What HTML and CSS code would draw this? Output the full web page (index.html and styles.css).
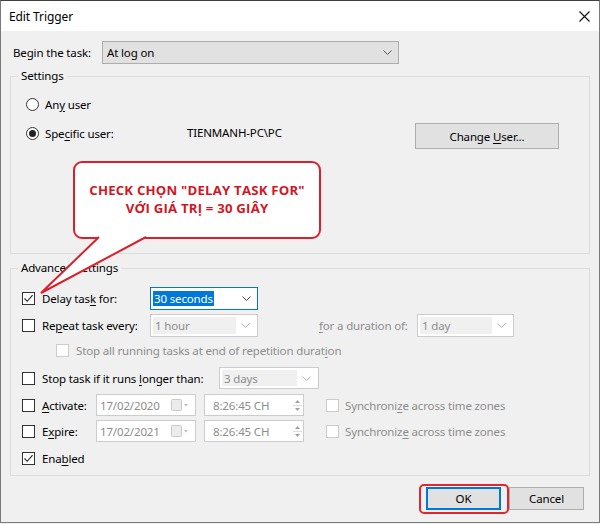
FILE: index.html
```html
<!DOCTYPE html>
<html>
<head>
<meta charset="utf-8">
<title>Edit Trigger</title>
<link rel="stylesheet" href="styles.css">
</head>
<body>
<div class="window">
  <div class="titlebar">
    <span class="title">Edit Trigger</span>
    <svg class="close" viewBox="0 0 11 11"><path d="M0.5 0.5 L10.5 10.5 M10.5 0.5 L0.5 10.5" stroke="#111" stroke-width="1.1" fill="none"/></svg>
  </div>
  <div class="content">
    <div class="begin-row">
      <span class="begin-label">Begin the task:</span>
      <div class="select">
        <span class="val">At log on</span>
        <svg class="chev" viewBox="0 0 9 5"><path d="M0.5 0.5 L4.5 4.5 L8.5 0.5" stroke="#555" fill="none"/></svg>
      </div>
    </div>

    <div class="group settings">
      <span class="group-title">Settings</span>
      <div class="row radio-row">
        <span class="radio"></span><span class="lbl">An<u>y</u> user</span>
      </div>
      <div class="row specific">
        <div class="radio-part"><span class="radio checked"></span><span class="lbl">Spe<u>c</u>ific user:</span></div>
        <span class="username">TIENMANH-PC\PC</span>
        <button class="btn change">Change <u>U</u>ser...</button>
      </div>
    </div>

    <div class="group advanced">
      <span class="group-title">Advanced Settings</span>

      <div class="row r-delay">
        <span class="cb checked"><svg viewBox="0 0 11 11"><path d="M1.5 5.5 L4.2 8.3 L9.6 2.2" stroke="#222" stroke-width="1.1" fill="none"/></svg></span>
        <span class="lbl w-delay">Delay tas<u>k</u> for:</span>
        <div class="combo edit w-108">
          <span class="val"><span class="sel">30 seconds</span></span>
          <svg class="chev" viewBox="0 0 9 5"><path d="M0.5 0.5 L4.5 4.5 L8.5 0.5" stroke="#444" fill="none"/></svg>
        </div>
      </div>

      <div class="row r-repeat">
        <span class="cb"></span>
        <span class="lbl w-delay">Re<u>p</u>eat task every:</span>
        <div class="combo disabled w-108">
          <span class="val">1 hour</span>
          <span class="arr"><svg class="chev" viewBox="0 0 9 5"><path d="M0.5 0.5 L4.5 4.5 L8.5 0.5" stroke="#b5b5b5" fill="none"/></svg></span>
        </div>
        <span class="lbl gray dur"><u>f</u>or a duration of:</span>
        <div class="combo disabled w-97">
          <span class="val">1 day</span>
          <span class="arr"><svg class="chev" viewBox="0 0 9 5"><path d="M0.5 0.5 L4.5 4.5 L8.5 0.5" stroke="#b5b5b5" fill="none"/></svg></span>
        </div>
      </div>

      <div class="row r-stopall">
        <span class="cb disabled"></span>
        <span class="lbl gray">Stop all running tasks at end of repetition durat<u>i</u>on</span>
      </div>

      <div class="row r-stop">
        <span class="cb"></span>
        <span class="lbl w-stop">Stop task if it runs <u>l</u>onger than:</span>
        <div class="combo disabled w-100">
          <span class="val">3 days</span>
          <span class="arr"><svg class="chev" viewBox="0 0 9 5"><path d="M0.5 0.5 L4.5 4.5 L8.5 0.5" stroke="#b5b5b5" fill="none"/></svg></span>
        </div>
      </div>

      <div class="row r-act">
        <span class="cb"></span>
        <span class="lbl w-act"><u>A</u>ctivate:</span>
        <div class="picker date">
          <span class="val">17/02/2020</span>
          <svg class="cal" viewBox="0 0 20 12"><rect x="0.5" y="0.5" width="10" height="11" rx="1" fill="#ececec" stroke="#c9c9c9"/><path d="M13 5 L17 5 L15 7.5 Z" fill="#bdbdbd"/></svg>
        </div>
        <div class="picker time">
          <span class="val">8:26:45 CH</span>
          <span class="spin"><svg viewBox="0 0 9 19"><path d="M2 7 L4.5 4 L7 7 Z" fill="#a0a0a0"/><path d="M2 12 L4.5 15 L7 12 Z" fill="#a0a0a0"/><path d="M0 9.5 H9" stroke="#dcdcdc"/></svg></span>
        </div>
        <span class="cb disabled sync"></span>
        <span class="lbl gray">Synchroni<u>z</u>e across time zones</span>
      </div>

      <div class="row r-exp">
        <span class="cb"></span>
        <span class="lbl w-act">E<u>x</u>pire:</span>
        <div class="picker date">
          <span class="val">17/02/2021</span>
          <svg class="cal" viewBox="0 0 20 12"><rect x="0.5" y="0.5" width="10" height="11" rx="1" fill="#ececec" stroke="#c9c9c9"/><path d="M13 5 L17 5 L15 7.5 Z" fill="#bdbdbd"/></svg>
        </div>
        <div class="picker time">
          <span class="val">8:26:45 CH</span>
          <span class="spin"><svg viewBox="0 0 9 19"><path d="M2 7 L4.5 4 L7 7 Z" fill="#a0a0a0"/><path d="M2 12 L4.5 15 L7 12 Z" fill="#a0a0a0"/><path d="M0 9.5 H9" stroke="#dcdcdc"/></svg></span>
        </div>
        <span class="cb disabled sync"></span>
        <span class="lbl gray">Synchroniz<u>e</u> across time zones</span>
      </div>

      <div class="row r-enabled">
        <span class="cb checked"><svg viewBox="0 0 11 11"><path d="M1.5 5.5 L4.2 8.3 L9.6 2.2" stroke="#222" stroke-width="1.1" fill="none"/></svg></span>
        <span class="lbl">Ena<u>b</u>led</span>
      </div>
    </div>

    <div class="buttons">
      <div class="ok-wrap">
        <button class="btn ok">OK</button>
        <span class="highlight"></span>
      </div>
      <button class="btn cancel">Cancel</button>
    </div>
  </div>

  <div class="callout">
    <p>CHECK CHỌN "DELAY TASK FOR"</p>
    <p>VỚI GIÁ TRỊ = 30 GIÂY</p>
  </div>
  <svg class="tail" viewBox="0 0 120 62">
    <path d="M62 0 L4 56 L109 0 Z" fill="#fff"/>
    <path d="M62 0 L4 56 L109 0" fill="none" stroke="#d9212b" stroke-width="2" stroke-linejoin="miter"/>
  </svg>
</div>
</body>
</html>
```

FILE: styles.css
```css
* { box-sizing: border-box; }
html, body { margin: 0; padding: 0; }
body {
  width: 600px;
  height: 524px;
  overflow: hidden;
  background: #f0f0f0;
  font-family: "Noto Sans", "Segoe UI", sans-serif;
  font-size: 11.5px;
  letter-spacing: -0.15px;
  color: #000;
}
u { text-decoration-thickness: 1px; text-underline-offset: 2px; }

.window {
  position: relative;
  width: 600px;
  height: 523px;
  border: 1px solid #7a7a7a;
  border-top-color: #3f3f3f;
  background: #f0f0f0;
}

.titlebar {
  height: 30px;
  background: #fff;
  display: flex;
  align-items: center;
  justify-content: space-between;
  padding: 0 9px 0 8px;
}
.title { font-size: 12px; letter-spacing: -0.1px; }
.close { width: 11px; height: 11px; display: block; }

.content { padding: 10px 9px 0 9px; }

.begin-row {
  height: 23px;
  display: flex;
  align-items: center;
}
.begin-label { width: 89px; margin-left: 3px; }
.select {
  width: 297px;
  height: 23px;
  background: #e1e1e1;
  border: 1px solid #adadad;
  display: flex;
  align-items: center;
  justify-content: space-between;
  padding: 0 6px 0 4px;
}
.chev { width: 9px; height: 5px; display: block; }

.group {
  position: relative;
  border: 1px solid #dcdcdc;
  width: 580px;
}
.group-title {
  position: absolute;
  top: -9px;
  left: 7px;
  padding: 0 3px;
  line-height: 16px;
  background: #f0f0f0;
}
.settings {
  margin-top: 12px;
  height: 178px;
  padding: 17px 0 0 15px;
}
.advanced {
  margin-top: 14px;
  height: 208px;
  padding: 18px 0 0 11px;
}

.row { display: flex; align-items: center; }
.radio-row { height: 20px; }
.radio {
  width: 13px;
  height: 13px;
  border: 1px solid #333;
  border-radius: 50%;
  background: #fff;
  margin-right: 6px;
  flex: none;
  display: flex;
  align-items: center;
  justify-content: center;
}
.radio.checked::after {
  content: "";
  width: 7px;
  height: 7px;
  border-radius: 50%;
  background: #222;
}
.specific { margin-top: 9px; align-items: flex-start; }
.radio-part { width: 161px; height: 20px; display: flex; align-items: center; }
.username { width: 228px; height: 20px; line-height: 20px; }

.btn {
  font-family: inherit;
  font-size: 11.5px;
  letter-spacing: -0.15px;
  color: #000;
  background: #e1e1e1;
  border: 1px solid #adadad;
  padding: 0;
  margin: 0;
}
.change { width: 144px; height: 26px; }

.cb {
  width: 13px;
  height: 13px;
  border: 1px solid #333;
  background: #fff;
  flex: none;
  margin-right: 7px;
  display: flex;
  align-items: center;
  justify-content: center;
}
.cb svg { width: 11px; height: 11px; display: block; }
.cb.disabled { border-color: #cccccc; }

.gray { color: #8d8d8d; }
.w-delay { width: 108px; }
.w-stop { width: 177px; }
.w-act { width: 54px; }
.dur { width: 98px; margin-left: 61px; }

.r-delay { height: 23px; }
.r-repeat { height: 23px; margin-top: 4px; }
.r-stopall { height: 20px; margin-top: 3px; padding-left: 34px; }
.r-stop { height: 22px; margin-top: 7px; }
.r-act { height: 22px; margin-top: 5px; }
.r-exp { height: 22px; margin-top: 4px; }
.r-enabled { height: 20px; margin-top: 6px; }

.combo {
  height: 23px;
  display: flex;
  align-items: center;
  flex: none;
}
.w-108 { width: 108px; }
.w-97 { width: 97px; }
.w-100 { width: 100px; height: 22px; }
.combo.edit {
  background: #fff;
  border: 1px solid #0078d7;
  padding: 0 6px 0 2px;
  justify-content: space-between;
}
.combo.edit .sel {
  background: #0078d7;
  color: #fff;
  padding: 0 1px;
  line-height: 15px;
  display: inline-block;
}
.combo.disabled {
  background: #fff;
  border: 1px solid #cccccc;
  padding: 2px;
}
.combo.disabled .val {
  flex: 1;
  align-self: stretch;
  background: #f0f0f0;
  color: #8d8d8d;
  padding-left: 2px;
  display: flex;
  align-items: center;
}
.combo.disabled .arr {
  width: 19px;
  display: flex;
  align-items: center;
  justify-content: center;
}

.picker {
  width: 100px;
  height: 22px;
  background: #fff;
  border: 1px solid #cccccc;
  display: flex;
  align-items: center;
  justify-content: space-between;
  flex: none;
  color: #8d8d8d;
}
.date { padding: 0 4px 0 3px; }
.cal { width: 20px; height: 12px; display: block; }
.time { margin-left: 8px; padding: 0 1px 0 8px; }
.spin { width: 9px; height: 19px; display: block; }
.spin svg { width: 9px; height: 19px; display: block; }
.sync { margin-left: 22px; margin-right: 6px; }

.buttons {
  margin-top: 11px;
  display: flex;
  justify-content: flex-end;
  padding-right: 6px;
  gap: 8px;
}
.ok-wrap { position: relative; }
.ok, .cancel { width: 75px; height: 23px; display: block; }
.ok { border-color: #0078d7; box-shadow: inset 0 0 0 1px #0078d7; }
.highlight {
  position: absolute;
  left: -7px;
  right: -8px;
  top: -3px;
  bottom: -4px;
  border: 2px solid #e0262f;
  border-radius: 5px;
}

.callout {
  position: absolute;
  left: 72px;
  top: 160px;
  width: 248px;
  height: 78px;
  background: #fff;
  border: 2px solid #d9212b;
  border-radius: 9px;
  display: flex;
  flex-direction: column;
  justify-content: center;
  align-items: center;
  color: #d2161f;
  font-family: "Open Sans", "Noto Sans", sans-serif;
  font-weight: 700;
  font-size: 13.2px;
  letter-spacing: 0.2px;
  line-height: 18px;
  padding-bottom: 3px;
}
.callout p { margin: 0; }
.tail {
  position: absolute;
  left: 36px;
  top: 236px;
  width: 120px;
  height: 62px;
  overflow: visible;
}
```
